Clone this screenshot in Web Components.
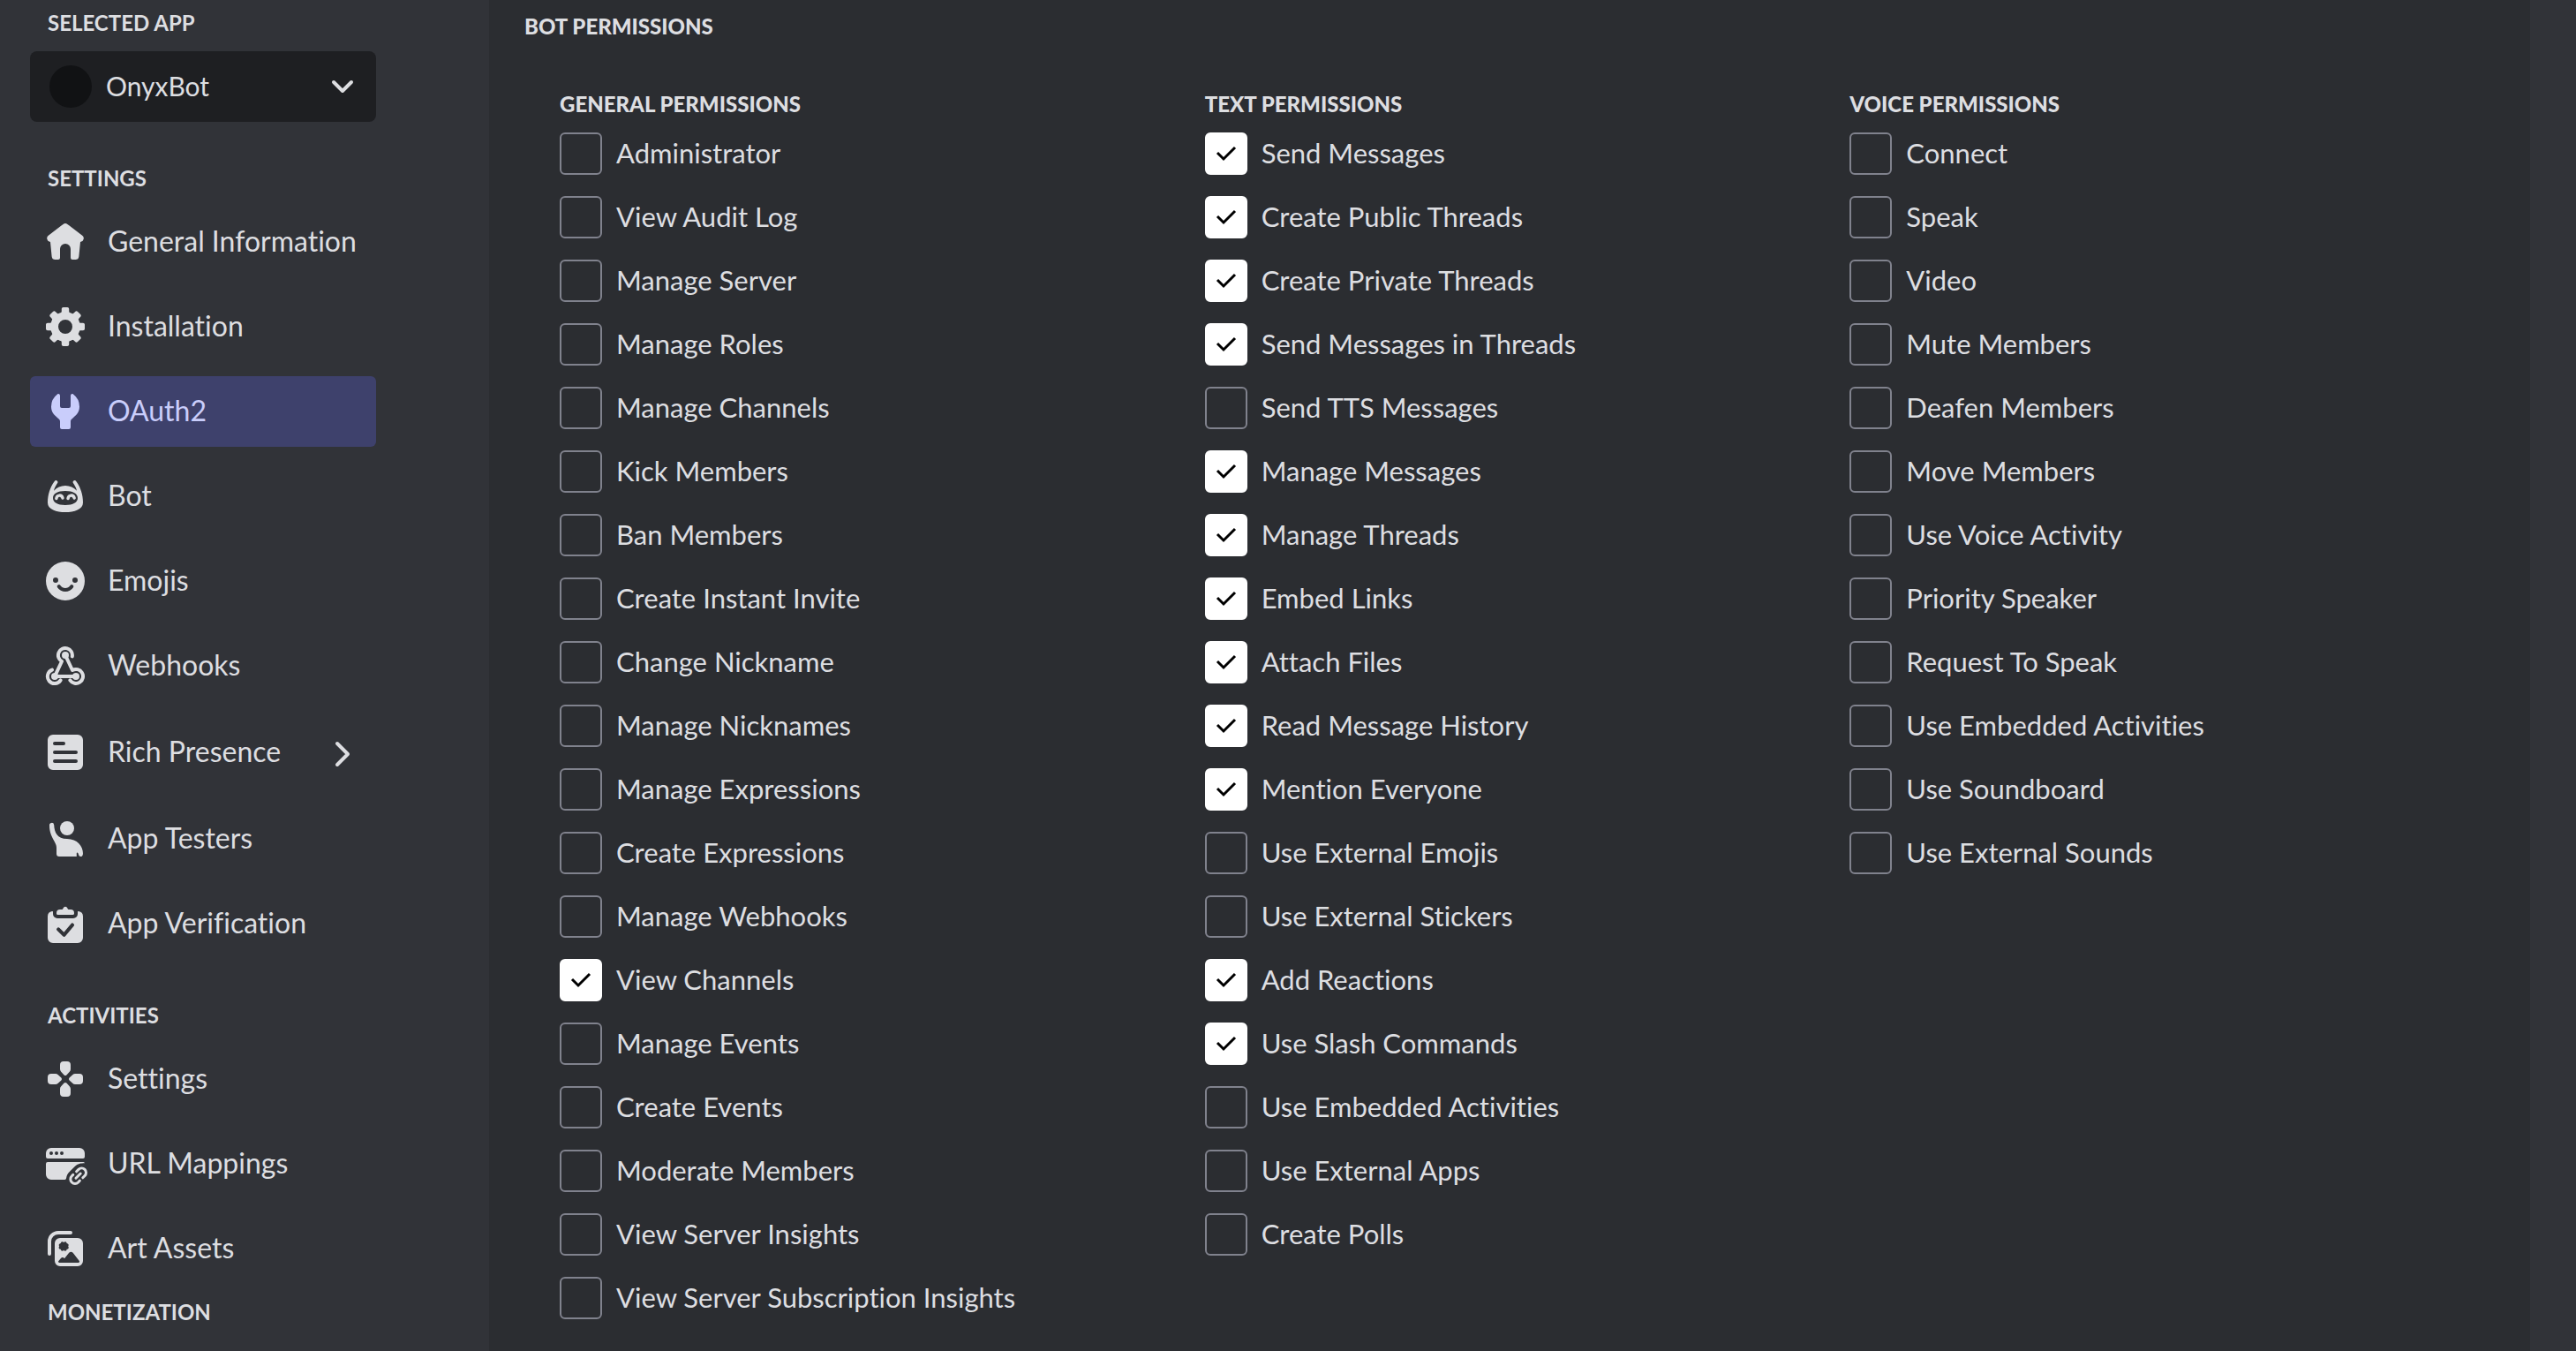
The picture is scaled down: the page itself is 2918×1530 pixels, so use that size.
<!DOCTYPE html>
<html lang="en">
<head>
<meta charset="utf-8">
<title>OnyxBot - OAuth2</title>
<style>
  html { background: #313338; }
  body {
    margin: 0;
    font-family: Lato, "Open Sans", sans-serif;
    font-size: 31px;
    line-height: 40px;
    font-variant-ligatures: none;
    color: #dddee1;
  }
</style>
</head>
<body>
<portal-page>
  <portal-sidebar slot="sidebar">
    <app-picker label="Selected App" app="OnyxBot"></app-picker>
    <nav-section heading="Settings">
      <nav-item icon="home">General Information</nav-item>
      <nav-item icon="gear">Installation</nav-item>
      <nav-item icon="wrench" active>OAuth2</nav-item>
      <nav-item icon="bot">Bot</nav-item>
      <nav-item icon="emoji">Emojis</nav-item>
      <nav-item icon="webhook">Webhooks</nav-item>
      <nav-item icon="rich" expandable>Rich Presence</nav-item>
      <nav-item icon="testers">App Testers</nav-item>
      <nav-item icon="verify">App Verification</nav-item>
    </nav-section>
    <nav-section heading="Activities">
      <nav-item icon="pad">Settings</nav-item>
      <nav-item icon="url">URL Mappings</nav-item>
      <nav-item icon="art">Art Assets</nav-item>
    </nav-section>
    <nav-section heading="Monetization" compact></nav-section>
  </portal-sidebar>
  <permissions-panel heading="Bot Permissions">
    <permission-group heading="General Permissions">
      <permission-check>Administrator</permission-check>
      <permission-check>View Audit Log</permission-check>
      <permission-check>Manage Server</permission-check>
      <permission-check>Manage Roles</permission-check>
      <permission-check>Manage Channels</permission-check>
      <permission-check>Kick Members</permission-check>
      <permission-check>Ban Members</permission-check>
      <permission-check>Create Instant Invite</permission-check>
      <permission-check>Change Nickname</permission-check>
      <permission-check>Manage Nicknames</permission-check>
      <permission-check>Manage Expressions</permission-check>
      <permission-check>Create Expressions</permission-check>
      <permission-check>Manage Webhooks</permission-check>
      <permission-check checked>View Channels</permission-check>
      <permission-check>Manage Events</permission-check>
      <permission-check>Create Events</permission-check>
      <permission-check>Moderate Members</permission-check>
      <permission-check>View Server Insights</permission-check>
      <permission-check>View Server Subscription Insights</permission-check>
    </permission-group>
    <permission-group heading="Text Permissions">
      <permission-check checked>Send Messages</permission-check>
      <permission-check checked>Create Public Threads</permission-check>
      <permission-check checked>Create Private Threads</permission-check>
      <permission-check checked>Send Messages in Threads</permission-check>
      <permission-check>Send TTS Messages</permission-check>
      <permission-check checked>Manage Messages</permission-check>
      <permission-check checked>Manage Threads</permission-check>
      <permission-check checked>Embed Links</permission-check>
      <permission-check checked>Attach Files</permission-check>
      <permission-check checked>Read Message History</permission-check>
      <permission-check checked>Mention Everyone</permission-check>
      <permission-check>Use External Emojis</permission-check>
      <permission-check>Use External Stickers</permission-check>
      <permission-check checked>Add Reactions</permission-check>
      <permission-check checked>Use Slash Commands</permission-check>
      <permission-check>Use Embedded Activities</permission-check>
      <permission-check>Use External Apps</permission-check>
      <permission-check>Create Polls</permission-check>
    </permission-group>
    <permission-group heading="Voice Permissions">
      <permission-check>Connect</permission-check>
      <permission-check>Speak</permission-check>
      <permission-check>Video</permission-check>
      <permission-check>Mute Members</permission-check>
      <permission-check>Deafen Members</permission-check>
      <permission-check>Move Members</permission-check>
      <permission-check>Use Voice Activity</permission-check>
      <permission-check>Priority Speaker</permission-check>
      <permission-check>Request To Speak</permission-check>
      <permission-check>Use Embedded Activities</permission-check>
      <permission-check>Use Soundboard</permission-check>
      <permission-check>Use External Sounds</permission-check>
    </permission-group>
  </permissions-panel>
</portal-page>

<script>
const ICONS = {
  home: '<path d="m2.4 8.4 8.38-6.46a2 2 0 0 1 2.44 0l8.39 6.45a2 2 0 0 1-.79 3.54l-.32.07-.82 8.2a2 2 0 0 1-1.99 1.8H16a1 1 0 0 1-1-1v-5a3 3 0 0 0-6 0v5a1 1 0 0 1-1 1H6.31a2 2 0 0 1-1.99-1.8L3.5 12l-.32-.07a2 2 0 0 1-.78-3.54Z"/>',
  gear: '<circle cx="12" cy="12" r="6.2" fill="none" stroke="currentColor" stroke-width="4.4"/>' +
    [0, 45, 90, 135, 180, 225, 270, 315].map(a => `<path d="M9.2 4.6c.5-.5.7-.9.7-1.5V2c0-.6.4-1 1-1h2.2c.6 0 1 .4 1 1v1.1c0 .6.2 1 .7 1.5Z" transform="rotate(${a} 12 12)"/>`).join(''),
  wrench: '<path d="M9 3.1V9a1 1 0 0 0 1 1h4a1 1 0 0 0 1-1V3.1c0-.9.8-1.4 1.5-.9A8.8 8.8 0 0 1 20 9.3c0 2.9-1.5 4.6-3.6 6.3-.8.6-1.4 1.2-1.4 2V21a1 1 0 0 1-1 1h-4a1 1 0 0 1-1-1v-3.4c0-.8-.6-1.4-1.4-2C5.5 13.9 4 12.2 4 9.3a8.8 8.8 0 0 1 3.5-7.1C8.2 1.7 9 2.2 9 3.1Z"/>',
  bot: '<path fill-rule="evenodd" d="M5.9 3.5a1 1 0 0 1 1.8.8C6.600 6 5.800 7.400 5.500 8.900A9 9 0 0 1 12 6a9 9 0 0 1 6.500 2.900c-.3-1.500-1.100-2.900-2.200-4.600a1 1 0 0 1 1.8-.8C20.600 6.900 22 11 22 15.600 22 19.500 17 21 12 21S2 19.500 2 15.600C2 11 3.400 6.900 5.900 3.500ZM12 9c-4.500 0-7 1.600-7 4s2.500 4 7 4 7-1.600 7-4-2.500-4-7-4Z"/><path d="M6.900 13.300c.4-2.300 3-2.300 3.600-.3M13.500 13.300c.4-2.300 3-2.300 3.600-.3" fill="none" stroke="currentColor" stroke-width="1.7" stroke-linecap="round"/>',
  emoji: '<path fill-rule="evenodd" d="M12 23a11 11 0 1 0 0-22 11 11 0 0 0 0 22ZM6.5 13a1.5 1.5 0 1 0 0-3 1.5 1.5 0 0 0 0 3Zm11 0a1.5 1.5 0 1 0 0-3 1.5 1.5 0 0 0 0 3Zm-8.300 1.500a1 1 0 1 0-1.700 1.100 5.400 5.400 0 0 0 9 0 1 1 0 1 0-1.700-1.100 3.400 3.400 0 0 1-5.600 0Z"/>',
  webhook: '<g fill="none" stroke="currentColor" stroke-width="2" stroke-linecap="round" stroke-linejoin="round"><path d="M15.9 6.7A4 4 0 1 0 10 9.5L6 18"/><path d="M4.5 14.3A4 4 0 1 0 9.300 20.2M6 18h12M14.7 20.2A4 4 0 1 0 16 14.5L12 6"/></g><circle cx="12" cy="6" r="2"/><circle cx="6" cy="18" r="2"/><circle cx="18" cy="18" r="2"/>',
  rich: '<path fill-rule="evenodd" d="M5 2h14a3 3 0 0 1 3 3v14a3 3 0 0 1-3 3H5a3 3 0 0 1-3-3V5a3 3 0 0 1 3-3Zm1 4a1 1 0 0 0 0 2h5a1 1 0 1 0 0-2H6Zm0 5a1 1 0 1 0 0 2h12a1 1 0 1 0 0-2H6Zm0 5a1 1 0 1 0 0 2h12a1 1 0 1 0 0-2H6Z"/>',
  testers: '<circle cx="13" cy="6" r="4"/><path d="M3 4.4a1.3 1.3 0 0 1 2.6-.3c.2 4.2 1.8 7.9 7.4 7.9 5.8 0 9 4.2 9 8.2 0 1.2-.6 1.8-1.3 1.8-.6 0-1-.4-1.2-1.1-.2-.8-.5-1.2-.8-1.2-.2 0-.3.3-.3.7V22H8.500A1.5 1.5 0 0 1 7 20.500V17c0-1.4-.6-2.3-1.3-3.700C4.200 10.600 3 8.100 3 4.400Z"/>',
  verify: '<path d="M9 4h.8c.5 0 .8-.3 1-.8a1.3 1.3 0 0 1 2.4 0c.2.5.5.8 1 .8h.8a2 2 0 0 1 2 2v.2a.8.8 0 0 1-.8.8H7.800a.8.8 0 0 1-.8-.8V6a2 2 0 0 1 2-2Z"/><path fill-rule="evenodd" d="M5 6.500V5.300c0-.3-.2-.4-.5-.3A3 3 0 0 0 2 7.900V20a3 3 0 0 0 3 3h14a3 3 0 0 0 3-3V7.900A3 3 0 0 0 19.500 5c-.3-.1-.5 0-.5.3v1.2A2.500 2.500 0 0 1 16.500 9h-9A2.500 2.500 0 0 1 5 6.500Zm11.800 6.900a1 1 0 0 0-1.600-1.300l-4 4.800-2.400-2.400a1 1 0 0 0-1.500 1.400l3.300 3.200a1 1 0 0 0 1.500-.1l4.700-5.600Z"/>',
  pad: [0, 90, 180, 270].map(a => `<path d="M9 4a2 2 0 0 1 2-2h2a2 2 0 0 1 2 2v2.400c0 .6-.2 1.100-.6 1.500l-1.700 1.800a1 1 0 0 1-1.400 0L9.600 7.900A2.200 2.200 0 0 1 9 6.400V4Z" transform="rotate(${a} 12 12)"/>`).join(''),
  url: '<path fill-rule="evenodd" d="M4 3h16a3 3 0 0 1 3 3v2a1 1 0 0 1-1 1H2a1 1 0 0 1-1-1V6a3 3 0 0 1 3-3Zm0 4a1 1 0 1 0 0-2 1 1 0 0 0 0 2Zm3 0a1 1 0 1 0 0-2 1 1 0 0 0 0 2Zm3 0a1 1 0 1 0 0-2 1 1 0 0 0 0 2Z"/><path d="M2 11h20a1 1 0 0 1 1 .6c-2.300 0-4 .3-5.600 1.900l-2.900 2.900c-1.300 1.200-1.700 2.300-2 3.900-.1.500-.4.700-.8.700H4a3 3 0 0 1-3-3v-6a1 1 0 0 1 1-1Z"/><g fill="none" stroke="currentColor" stroke-width="1.500" stroke-linecap="round"><path d="m18.300 16.400 1.200-1.200a2.500 2.500 0 0 1 3.500 0a2.500 2.500 0 0 1 0 3.600l-1.100 1.100M16.400 18.200l-.7.700a2.500 2.500 0 0 0 0 3.600a2.500 2.500 0 0 0 3.600 0l.9-1M18 20.100l2.600-2.600"/></g>',
  art: '<path d="M3 15V8a5 5 0 0 1 5-5h7" fill="none" stroke="currentColor" stroke-width="2" stroke-linecap="round"/><path fill-rule="evenodd" d="M9 6h10a3 3 0 0 1 3 3v10a3 3 0 0 1-3 3H9a3 3 0 0 1-3-3V9a3 3 0 0 1 3-3Zm2.100 2.500c-.5-.7-1.700-.4-1.700.5-.9.100-1.400 1-.8 1.700-.6.700-.1 1.700.8 1.700 0 1 1.200 1.300 1.700.5.500.8 1.700.500 1.700-.5.900 0 1.400-1 .8-1.700.6-.7.100-1.600-.8-1.700 0-.9-1.200-1.200-1.700-.5ZM8 19.400c0 .3.300.6.600.6h10.800c.5 0 .8-.6.500-1l-3.600-4.600c-.6-.7-1.600-.7-2.200 0L11.500 17.600l-.4-.3c-.5-.4-1.100-.3-1.500.1L8.200 19c-.1.100-.2.300-.2.400Z"/>',
};

const make = (name, template) => customElements.define(name, class extends HTMLElement {
  constructor() {
    super();
    this.attachShadow({ mode: 'open' });
  }
  connectedCallback() {
    if (!this.shadowRoot.firstChild) this.shadowRoot.innerHTML = template(this);
  }
});

make('portal-page', () => `
  <style>
    :host { display: flex; height: 100vh; overflow: hidden; background: #313338; }
    ::slotted(permissions-panel) { flex: 1; }
  </style>
  <slot name="sidebar"></slot>
  <slot></slot>`);

make('portal-sidebar', () => `
  <style>
    :host { display: block; flex: none; width: 392px; padding: 12px 128px 0 34px; }
  </style>
  <slot></slot>`);

make('app-picker', el => `
  <style>
    :host { display: block; }
    label {
      display: block; padding-left: 20px; margin-bottom: 18px;
      font-size: 24px; line-height: 28px; font-weight: 700; text-transform: uppercase;
    }
    .box { display: grid; align-items: center; height: 80px; border-radius: 8px; background: #1e1f22; }
    .box > * { grid-area: 1 / 1; }
    .avatar { width: 48px; height: 48px; margin-left: 22px; border-radius: 50%; background: #111214; }
    svg { justify-self: end; margin-right: 22px; width: 32px; height: 32px; pointer-events: none; }
    select {
      appearance: none; width: 100%; height: 80px; margin: 0; padding: 0 60px 2px 86px;
      border: 0; border-radius: 8px; background: transparent;
      font: inherit; font-size: 30px; color: inherit; cursor: pointer;
    }
  </style>
  <label for="app">${el.getAttribute('label')}</label>
  <div class="box">
    <span class="avatar"></span>
    <select id="app"><option>${el.getAttribute('app')}</option></select>
    <svg viewBox="0 0 32 32" fill="none" stroke="currentColor" stroke-width="4" stroke-linecap="round" stroke-linejoin="round" aria-hidden="true"><path d="m6 11 10 10 10-10"/></svg>
  </div>`);

make('nav-section', el => `
  <style>
    :host { display: block; padding-top: 50px; }
    :host([compact]) { padding-top: 18px; }
    h2 {
      margin: 0 0 18px; padding-left: 20px;
      font-size: 24px; line-height: 28px; font-weight: 700; text-transform: uppercase;
    }
    nav { display: flex; flex-direction: column; gap: 16px; }
  </style>
  <h2>${el.getAttribute('heading')}</h2>
  <nav><slot></slot></nav>`);

make('nav-item', el => `
  <style>
    :host { display: block; font-size: 32px; }
    a {
      display: flex; align-items: center; gap: 24px; height: 80px; padding: 0 16px;
      border-radius: 6px; color: inherit; text-decoration: none; white-space: nowrap;
    }
    :host([expandable]) a { height: 84px; }
    :host([active]) a { background: #3e416c; color: #c9cdfb; }
    .icon { flex: none; width: 48px; height: 48px; overflow: visible; }
    .text { padding-bottom: 2px; }
    .chevron { margin-left: auto; width: 44px; height: 44px; }
  </style>
  <a href="#">
    <svg class="icon" viewBox="0 0 24 24" fill="currentColor" aria-hidden="true">${ICONS[el.getAttribute('icon')]}</svg>
    <span class="text"><slot></slot></span>
    ${el.hasAttribute('expandable') ? '<svg class="chevron" viewBox="0 0 44 44" fill="none" stroke="currentColor" stroke-width="4" stroke-linecap="round" stroke-linejoin="round" aria-hidden="true"><path d="m16 12 12 12-12 12"/></svg>' : ''}
  </a>`);

make('permissions-panel', el => `
  <style>
    :host { display: block; margin-right: 52px; padding: 16px 40px 0; background: #2b2d31; }
    h1 { margin: 0 0 60px; font-size: 24px; line-height: 28px; font-weight: 900; text-transform: uppercase; }
    .groups { display: grid; grid-template-columns: repeat(3, 1fr); padding-left: 40px; }
  </style>
  <h1>${el.getAttribute('heading')}</h1>
  <div class="groups"><slot></slot></div>`);

make('permission-group', el => `
  <style>
    :host { display: block; }
    h2 { margin: 0 0 18px; font-size: 24px; line-height: 28px; font-weight: 900; text-transform: uppercase; }
    .list { display: flex; flex-direction: column; gap: 24px; }
  </style>
  <h2>${el.getAttribute('heading')}</h2>
  <div class="list"><slot></slot></div>`);

make('permission-check', el => `
  <style>
    :host { display: block; }
    label { display: flex; align-items: center; gap: 16px; height: 48px; white-space: nowrap; cursor: pointer; }
    .box { display: grid; flex: none; width: 48px; height: 48px; }
    .box > * { grid-area: 1 / 1; }
    .text { padding-bottom: 2px; }
    input {
      appearance: none; box-sizing: border-box; width: 48px; height: 48px; margin: 0;
      border: 2px solid #80828d; border-radius: 6px; cursor: pointer;
    }
    input:checked { border-color: #fff; background: #fff; }
    svg { display: none; width: 48px; height: 48px; pointer-events: none; }
    input:checked + svg { display: block; }
  </style>
  <label>
    <span class="box">
      <input type="checkbox"${el.hasAttribute('checked') ? ' checked' : ''}>
      <svg viewBox="0 0 48 48" fill="none" stroke="#000" stroke-width="3" aria-hidden="true"><path d="m14 23 7 7 13-13"/></svg>
    </span>
    <span class="text"><slot></slot></span>
  </label>`);
</script>
</body>
</html>
